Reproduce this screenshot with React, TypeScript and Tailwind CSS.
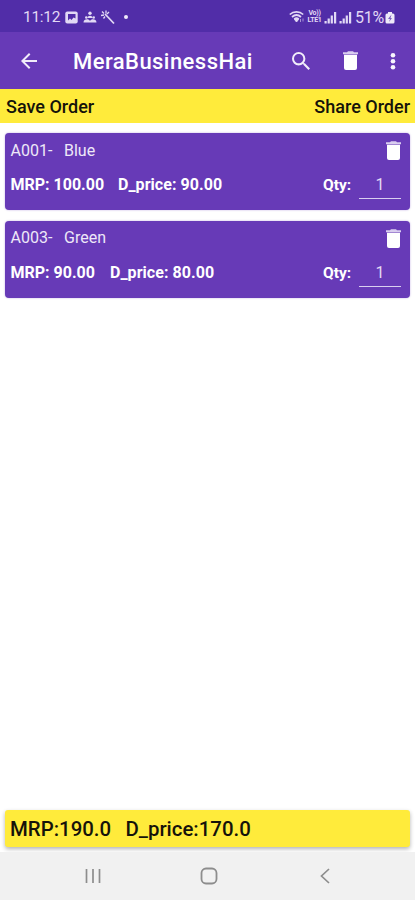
import React from "react";

function Trash({ className }: { className: string }) {
  return (
    <svg viewBox="0 0 15 19" preserveAspectRatio="none" className={className}>
      <path d="M5 .3h5l1 1h4v2H0v-2h4z" fill="#d9cdef" />
      <path d="M1 3.700h13V17a2 2 0 0 1-2 2H3a2 2 0 0 1-2-2z" fill="#fff" />
    </svg>
  );
}

function Signal() {
  return (
    <svg viewBox="0 0 13 13" className="h-[13px] w-[13px]" fill="currentColor">
      <rect x="0.5" y="10" width="2.2" height="2.5" />
      <rect x="3.6" y="7.5" width="2.2" height="5" />
      <rect x="6.7" y="4.5" width="2.2" height="8" />
      <rect x="10" y="1" width="2.2" height="11.5" />
    </svg>
  );
}

function StatusBar() {
  return (
    <div className="flex h-8 items-center bg-[#512da8] pt-0.5 pl-[23px] text-[#e2d9f5]">
      <span className="w-[42px] pt-0.5 text-[15.5px] tracking-[-0.3px] whitespace-pre">11:12</span>
      <svg viewBox="0 0 13 13" className="h-[13px] w-[13px]">
        <rect x="0.3" y="0.5" width="12.4" height="12" rx="2" fill="currentColor" />
        <path d="M3 3h7.500v4.500L8.500 6.500 6.500 9 5 7.500 3 9.500z" fill="#512da8" />
      </svg>
      <svg viewBox="0 0 14 13" className="ml-[5px] h-[13px] w-[14px]" fill="currentColor">
        <circle cx="7" cy="2.300" r="1.700" />
        <path d="M4.500 7c0-3 5-3 5 0z" />
        <circle cx="3.300" cy="6.500" r="1.300" />
        <circle cx="10.700" cy="6.500" r="1.300" />
        <path d="M.5 11.500c0-4 5.500-4 6.500-1.500 1-2.500 6.500-2.500 6.500 1.500z" />
      </svg>
      <svg viewBox="0 0 16 15" className="ml-[3px] h-[15px] w-4" fill="none" stroke="currentColor">
        <path d="M5 4l9 9.500" strokeWidth="1.800" />
        <path d="M1 5.500l3-.5M2 1.500l2 2M6 .5v3M9 2L7 4M3.500 8.500L5 6.500" strokeWidth="1.300" />
      </svg>
      <span className="ml-2 h-1 w-1 rounded-full bg-[#f0eafb]" />
      <div className="ml-auto flex items-center pr-[20px]">
        <svg viewBox="0 0 16 14" className="h-[14px] w-4" fill="none" stroke="currentColor">
          <path d="M.8 4.500C4.500 1 10.500 1 14.200 4.500M3 7c2.800-2.500 6.200-2.500 9 0M5.200 9.200c1.500-1.300 3.100-1.300 4.600 0" strokeWidth="1.700" />
          <path d="M5.500 9.500h4L7.500 12z" fill="currentColor" />
          <path d="M11.500 9v3M14 8.500v3" strokeWidth="1" opacity=".6" />
        </svg>
        <div className="ml-[2px] flex w-[15px] flex-col items-center text-[7px] leading-[7px] font-bold tracking-[-0.3px]">
          <span className="h-[7px]">Vo))</span>
          <span className="h-[7px]">LTE1</span>
        </div>
        <div className="ml-[2px]"><Signal /></div>
        <div className="ml-[2px]"><Signal /></div>
        <span className="ml-[3px] w-[30px] pt-0.5 text-[16px] tracking-[-0.3px]">51%</span>
        <svg viewBox="0 0 10 13" className="h-[13px] w-[10px]">
          <path d="M3 1h4v1.500h1a1.500 1.500 0 0 1 1.500 1.500v7A1.500 1.500 0 0 1 8 12.500H2A1.500 1.500 0 0 1 .5 11V4A1.500 1.500 0 0 1 2 2.500h1z" fill="#eee9f9" />
          <path d="M6.500 3.500L3 8h2L4 11l3-4H5.500z" fill="#7a5cbf" />
        </svg>
      </div>
    </div>
  );
}

function AppBar() {
  return (
    <div className="flex h-[57px] items-center bg-[#673ab7] text-white">
      <svg viewBox="4 4 16 16" className="ml-[21px] h-4 w-4" fill="#f1ecfa">
        <path d="M20 11H7.830l5.590-5.590L12 4l-8 8 8 8 1.410-1.410L7.830 13H20v-2z" />
      </svg>
      <span className="ml-9 w-[182px] pt-0.5 text-[22px] font-medium tracking-[0.45px] whitespace-pre">MeraBusinessHai</span>
      <svg viewBox="3 3 17.490 17.490" className="ml-[37px] h-[18px] w-[18px] shrink-0" fill="#f1ecfa">
        <path d="M15.500 14h-.79l-.28-.27A6.471 6.471 0 0 0 16 9.500 6.500 6.500 0 1 0 9.500 16c1.610 0 3.090-.59 4.230-1.570l.27.28v.79l5 4.990L20.490 19l-4.990-5zm-6 0C7.010 14 5 11.990 5 9.500S7.010 5 9.500 5 14 7.010 14 9.500 11.990 14 9.500 14z" />
      </svg>
      <Trash className="ml-[33px] h-[19px] w-[15px] shrink-0" />
      <svg viewBox="0 0 6 18" className="ml-8 h-[18px] w-[6px] shrink-0" fill="#f8f5fd">
        <circle cx="3" cy="3.200" r="2.300" />
        <circle cx="3" cy="9.200" r="2.300" />
        <circle cx="3" cy="15.200" r="2.300" />
      </svg>
    </div>
  );
}

type Item = { code: string; name: string; mrp: string; price: string; gap: string };

const items: Item[] = [
  { code: "A001-", name: "Blue", mrp: "100.00", price: "90.00", gap: "w-[107.500px]" },
  { code: "A003-", name: "Green", mrp: "90.00", price: "80.00", gap: "w-[99.500px]" },
];

function Card({ item }: { item: Item }) {
  return (
    <div className="flex h-[77px] flex-col rounded bg-[#673ab7] pr-[9px] pl-[5.500px] text-white shadow-[0_0_2px_rgba(103,58,183,0.45)]">
      <div className="flex h-[35px] items-center justify-between">
        <div className="flex text-[16px] leading-5 text-[#eee8f8]">
          <span className="w-[53.500px]">{item.code}</span>
          <span>{item.name}</span>
        </div>
        <Trash className="h-[19px] w-[15px]" />
      </div>
      <div className="flex h-[34px] items-center text-[16px] leading-5 font-bold">
        <span className={item.gap + " whitespace-pre"}>MRP: {item.mrp}</span>
        <span className="tracking-[0.05px] whitespace-pre">D_price: {item.price}</span>
        <span className="ml-auto w-9 text-[15.500px]">Qty:</span>
        <span className="flex h-[28px] w-[42px] items-center justify-center border-b-[1.500px] border-[#d9cef0] pt-px text-[16px] font-normal text-[#e3daf4]">1</span>
      </div>
    </div>
  );
}

export default function App() {
  return (
    <div className="flex h-[900px] w-[415px] flex-col overflow-hidden bg-white font-['Roboto',sans-serif]">
      <StatusBar />
      <AppBar />
      <div className="flex h-[34px] items-center justify-between bg-[#ffeb3b] pr-[5px] pl-1.5 text-[18px] font-medium text-[#15130a]">
        <span>Save Order</span>
        <span>Share Order</span>
      </div>
      <div className="flex flex-col gap-[10.500px] px-[5px] pt-2.5">
        {items.map((item) => (
          <Card key={item.code} item={item} />
        ))}
      </div>
      <div className="mt-auto px-[5px] pb-[5px]">
        <div className="flex h-[37px] items-center rounded-[3px] bg-[#ffeb3b] pt-0.5 pl-[5px] text-[20.400px] font-medium text-[#15130a] shadow-[0_2px_4px_rgba(0,0,0,0.3)]">
          <span className="w-[115.500px]">MRP:190.0</span>
          <span>D_price:170.0</span>
        </div>
      </div>
      <div className="flex h-12 items-center bg-[#f1f1f1]">
        <svg viewBox="0 0 16 16" className="ml-[85px] h-4 w-4" fill="none" stroke="#8d8d8d" strokeWidth="1.700">
          <path d="M1.500 1v14M8 1v14M14.500 1v14" />
        </svg>
        <svg viewBox="0 0 18 18" className="ml-[99px] h-[18px] w-[18px]" fill="none" stroke="#8d8d8d" strokeWidth="1.800">
          <rect x="1.500" y="1.500" width="15" height="15" rx="4.500" />
        </svg>
        <svg viewBox="0 0 10 16" className="ml-[102px] h-4 w-[10px]" fill="none" stroke="#8d8d8d" strokeWidth="1.700">
          <path d="M9 1L1.500 8 9 15" />
        </svg>
      </div>
    </div>
  );
}
